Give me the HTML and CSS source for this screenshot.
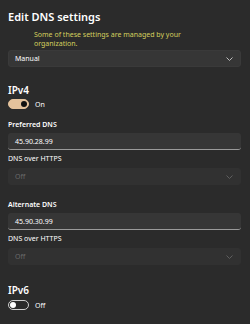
FILE: index.html
```html
<!DOCTYPE html>
<html lang="en">
<head>
    <meta charset="UTF-8">
    <meta name="viewport" content="width=device-width, initial-scale=1.0">
    <title>Edit DNS settings</title>
    <link rel="stylesheet" href="styles.css">
</head>
<body>
    <h1 class="title">Edit DNS settings</h1>
    <div class="notice">Some of these settings are managed by your organization.</div>

    <div class="select first">
        <span>Manual</span>
        <svg class="chevron" width="7" height="4" viewBox="0 0 7 4"><polyline points="0.5,0.5 3.5,3.5 6.5,0.5" fill="none" stroke="#bdbdbd" stroke-width="1"/></svg>
    </div>

    <h2 class="section">IPv4</h2>
    <div class="switch-row">
        <span class="switch on"><span class="knob"></span></span>
        <span class="switch-label">On</span>
    </div>

    <div class="label">Preferred DNS</div>
    <div class="input">45.90.28.99</div>
    <div class="label small">DNS over HTTPS</div>
    <div class="select disabled">
        <span>Off</span>
        <svg class="chevron" width="7" height="4" viewBox="0 0 7 4"><polyline points="0.5,0.5 3.5,3.5 6.5,0.5" fill="none" stroke="#5e5e5e" stroke-width="1"/></svg>
    </div>

    <div class="label gap">Alternate DNS</div>
    <div class="input">45.90.30.99</div>
    <div class="label small">DNS over HTTPS</div>
    <div class="select disabled">
        <span>Off</span>
        <svg class="chevron" width="7" height="4" viewBox="0 0 7 4"><polyline points="0.5,0.5 3.5,3.5 6.5,0.5" fill="none" stroke="#5e5e5e" stroke-width="1"/></svg>
    </div>

    <h2 class="section last">IPv6</h2>
    <div class="switch-row tight">
        <span class="switch"><span class="knob"></span></span>
        <span class="switch-label">Off</span>
    </div>
</body>
</html>
```

FILE: styles.css
```css
body {
    margin: 0;
    padding: 0 9px 0 8px;
    background: #2b2b2b;
    color: #ffffff;
    font-family: "Segoe UI", "Noto Sans", sans-serif;
    height: 324px;
    overflow: hidden;
}
.title {
    font-size: 11px;
    font-weight: 600;
    line-height: 14px;
    margin: 10px 0 0;
}
.notice {
    margin: 6px 0 0 26px;
    font-size: 7px;
    line-height: 9px;
    color: #d4cf5e;
    width: 160px;
}
.select {
    height: 17px;
    box-sizing: border-box;
    background: #363636;
    border: 1px solid #3a3a3a;
    border-radius: 3px;
    display: flex;
    align-items: center;
    justify-content: space-between;
    padding: 0 7px 0 6px;
    font-size: 7px;
    margin-top: 4px;
}
.select.first {
    margin-top: 2px;
}
.select.disabled {
    background: #313131;
    border-color: #313131;
    color: #6a6a6a;
}
.section {
    font-size: 10px;
    font-weight: 600;
    line-height: 14px;
    margin: 16px 0 0;
}
.section.last {
    margin-top: 18px;
}
.switch-row {
    display: flex;
    align-items: center;
    gap: 6px;
    margin-top: 2px;
    height: 10px;
}
.switch-row.tight {
    margin-top: 3px;
}
.switch {
    width: 21px;
    height: 10px;
    box-sizing: border-box;
    border-radius: 5px;
    border: 1px solid #cfcfcf;
    display: flex;
    align-items: center;
    padding: 0 1px;
}
.switch .knob {
    width: 6px;
    height: 6px;
    border-radius: 50%;
    background: #ffffff;
}
.switch.on {
    background: #e4c29c;
    border-color: #e4c29c;
    justify-content: flex-end;
}
.switch.on .knob {
    background: #111111;
}
.switch-label {
    font-size: 7px;
}
.label {
    font-size: 7px;
    font-weight: 600;
    line-height: 10px;
    margin-top: 11px;
}
.label.small {
    font-weight: 400;
    margin-top: 4px;
}
.label.gap {
    margin-top: 15px;
}
.input {
    height: 17px;
    box-sizing: border-box;
    background: #363636;
    border-radius: 3px;
    border-bottom: 1px solid #9a9a9a;
    font-size: 7px;
    display: flex;
    align-items: center;
    padding-left: 7px;
    margin-top: 3px;
}
```
